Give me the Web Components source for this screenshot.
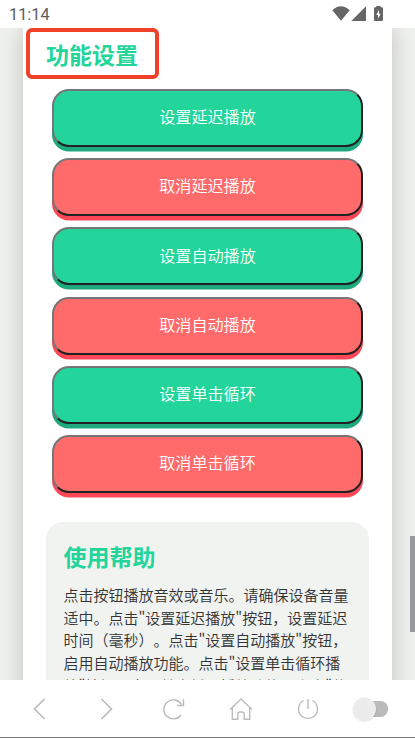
<!DOCTYPE html>
<html lang="zh-CN">
<head>
<meta charset="utf-8">
<title>功能设置</title>
<style>
html,body{margin:0;height:100%;overflow:hidden}
body{font-family:"Noto Sans CJK SC",sans-serif;color:#333;text-spacing-trim:space-all}
</style>
</head>
<body>
<app-screen></app-screen>
<script>
const define = (name, html) => customElements.define(name, class extends HTMLElement {
  constructor() {
    super();
    const t = document.createElement('template');
    t.innerHTML = html;
    this.attachShadow({mode: 'open'}).append(t.content.cloneNode(true));
  }
});

define('status-bar', `<style>
:host{display:flex;height:28px;flex:none;background:#fff;align-items:center;justify-content:space-between;padding:1px 31px 0 9px;box-sizing:border-box;font:450 16.300px/28px Roboto,sans-serif;color:#5c5c5c}
svg{display:block;margin-top:-1px}
</style><span>11:14</span>
<svg width="52" height="28" viewBox="332 0 52 28" fill="#666"><path d="M332.3 10.2Q341 2.3 349.7 10.2L341 20.7ZM366 6.3V20.9H351.3Z"/><path fill-rule="evenodd" d="M376.300 6h4.400v1.300h1.300q1 0 1 1V20q0 1-1 1h-7q-1 0-1-1V8.300q0-1 1-1h1.300ZM379 10l-2.700 5h1.700v3.800l2.700-5.100h-1.700Z"/></svg>`);

define('section-title', `<style>
:host{display:block;font-weight:700;font-size:23px;line-height:32px;padding-bottom:2px;color:#23d59b}
</style><slot></slot>`);

define('highlight-frame', `<style>
:host{display:block;width:133px;height:51px;box-sizing:border-box;border:4px solid #ef402a;border-radius:6px;padding:6px 0 0 16px}
</style><slot></slot>`);

define('action-button', `<style>
:host{display:flex;height:58px;box-sizing:border-box;align-items:center;justify-content:center;padding-bottom:3.500px;border:2px solid;border-color:#767676 #212121 #212121 #767676;border-radius:17px;background:#23d59b;box-shadow:0 4.500px 0 #1da97c;color:#fff;font-size:16.100px;font-weight:350;line-height:24px}
:host([kind=cancel]){background:#ff6b6b;box-shadow:0 4.500px 0 #ff4757}
</style><slot></slot>`);

define('help-box', `<style>
:host{display:block;margin:0 23px;padding:18px 17.500px;height:300px;background:#f1f3f1;border-radius:17px}
p{margin:10px 0 0;font-size:15px;font-weight:350;line-height:22.700px;white-space:nowrap}
</style><slot name="title"></slot><p><slot></slot></p>`);

define('nav-bar', `<style>
:host{display:grid;grid-template-columns:repeat(6,67px);padding-left:6px;height:58px;flex:none;box-sizing:border-box;background:#fff;border-bottom:1px solid #777;z-index:1}
svg{width:67px;height:57px;fill:none;stroke:#bcbcbc;stroke-width:1.400}
</style>
<svg viewBox="0 0 67 57"><path stroke-width="1.700" d="M38.500 19L28.500 29L38.500 39"/></svg>
<svg viewBox="0 0 67 57"><path stroke-width="1.700" d="M28.500 19L38.500 29L28.500 39"/></svg>
<svg viewBox="0 0 67 57"><path d="M41 35A9.500 9.500 0 1 1 41.500 24.500M43.500 19V25.500H37"/></svg>
<svg viewBox="0 0 67 57"><path d="M23 29.500L34 19L45 29.500M25.300 28V39.300H30.800V34Q30.800 32 32.800 32H35.200Q37.200 32 37.200 34V39.300H42.700V28"/></svg>
<svg viewBox="0 0 67 57"><path d="M29.500 20.500A9.500 9.500 0 1 0 38.500 20.500M34 19V29"/></svg>
<svg viewBox="0 0 67 57"><rect x="17" y="21" width="30" height="16" rx="7.500" fill="#bababa" stroke="none"/><circle cx="23.500" cy="30" r="12" fill="#000" opacity=".07" stroke="none"/><circle cx="23.500" cy="29" r="11.500" fill="#ececec" stroke="none"/></svg>`);

define('app-screen', `<style>
:host{display:flex;flex-direction:column;height:738px;width:415px;overflow:hidden;position:relative}
main{flex:1;min-height:0;overflow:hidden;background:#eff1ee}
.card{width:369px;height:900px;margin-left:23px;background:#fff;box-shadow:0 0 22px rgba(0,0,0,.2)}
highlight-frame{margin-left:3px}
.buttons{display:flex;flex-direction:column;gap:11.200px;padding:10px 29px 29px}
.thumb{position:absolute;right:0;top:536px;width:5px;height:96px;background:#98999b}
</style>
<status-bar></status-bar>
<main><div class="card">
<highlight-frame><section-title>功能设置</section-title></highlight-frame>
<div class="buttons">
<action-button>设置延迟播放</action-button>
<action-button kind="cancel">取消延迟播放</action-button>
<action-button>设置自动播放</action-button>
<action-button kind="cancel">取消自动播放</action-button>
<action-button>设置单击循环</action-button>
<action-button kind="cancel">取消单击循环</action-button>
</div>
<help-box><section-title slot="title">使用帮助</section-title>点击按钮播放音效或音乐。请确保设备音量<br>适中。点击"设置延迟播放"按钮，设置延迟<br>时间（毫秒）。点击"设置自动播放"按钮，<br>启用自动播放功能。点击"设置单击循环播<br>放"按钮，启用单击循环播放功能。点击"停</help-box>
</div></main>
<div class="thumb"></div>
<nav-bar></nav-bar>`);
</script>
</body>
</html>
